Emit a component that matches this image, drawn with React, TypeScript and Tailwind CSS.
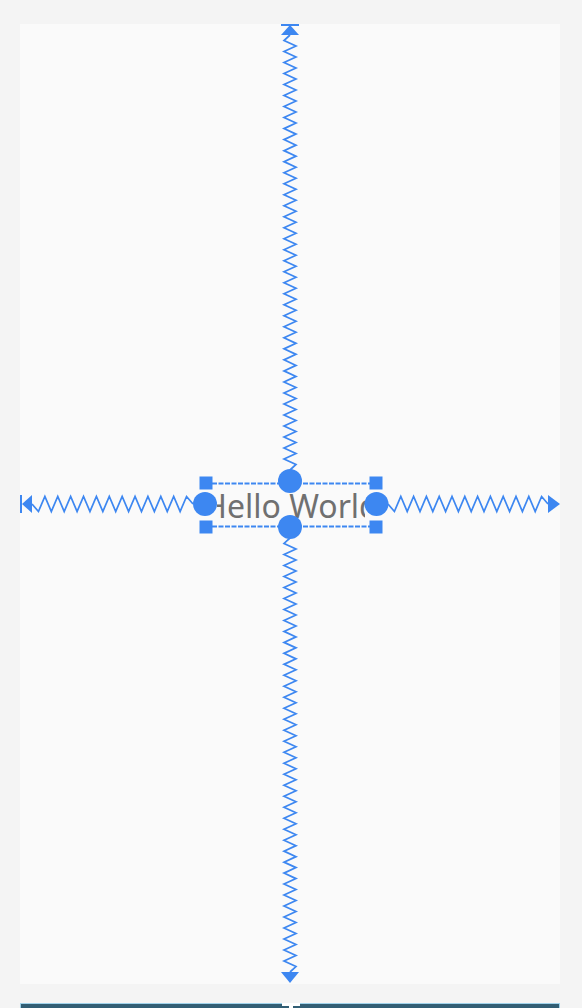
import React from 'react';

const BLUE = '#3d87f1';

// zigzag between two points, teeth perpendicular to the line
function zig(x0: number, y0: number, x1: number, y1: number, period: number, amp: number) {
  const len = Math.hypot(x1 - x0, y1 - y0);
  const ux = (x1 - x0) / len;
  const uy = (y1 - y0) / len;
  const n = Math.max(2, Math.round(len / (period / 2)));
  const step = len / n;
  const pts: string[] = [`${x0},${y0}`];
  for (let i = 1; i < n; i++) {
    const s = i * step;
    const side = i % 2 === 0 ? -amp : amp;
    pts.push(`${x0 + ux * s - uy * side},${y0 + uy * s + ux * side}`);
  }
  pts.push(`${x1},${y1}`);
  return pts.join(' ');
}

function Overlay() {
  const squares = [
    [186, 459],
    [356, 459],
    [186, 503],
    [356, 503],
  ];
  return (
    <svg className="absolute inset-0" width={540} height={960} viewBox="0 0 540 960">
      <g fill="none" stroke={BLUE} strokeWidth={1.7} strokeLinejoin="miter">
        <polyline points={zig(270, 11, 270, 446, 11, 6)} />
        <polyline points={zig(270, 514, 270, 948, 11, 6)} />
        <polyline points={zig(12, 480, 173, 480, 13, 7.5)} />
        <polyline points={zig(368, 480, 528, 480, 13, 7.5)} />
      </g>
      <g stroke={BLUE} strokeWidth={1.8} strokeDasharray="5 1.5">
        <line x1={192} y1={459.5} x2={350} y2={459.5} />
        <line x1={192} y1={502.5} x2={350} y2={502.5} />
      </g>
      <g fill={BLUE}>
        <rect x={261} y={0} width={18} height={2} />
        <polygon points="270,1 261,11 279,11" />
        <polygon points="261,948 279,948 270,959" />
        <rect x={0} y={471} width={2} height={18} />
        <polygon points="2,480 12,471 12,489" />
        <polygon points="528,471 528,489 540,480" />
        {squares.map(([x, y]) => (
          <rect key={`${x}-${y}`} x={x - 6.5} y={y - 6.5} width={13} height={13} />
        ))}
        <circle cx={270} cy={457} r={12} />
        <circle cx={270} cy={503} r={12} />
        <circle cx={185} cy={480} r={12} />
        <circle cx={356.5} cy={480} r={12} />
      </g>
    </svg>
  );
}

export default function App() {
  return (
    <div className="h-[1008px] w-[582px] overflow-hidden bg-[#f4f4f4] pt-[24px] px-[20px] flex flex-col">
      {/* Design canvas */}
      <div className="relative w-[540px] h-[960px] shrink-0 bg-[#fafafa]">
        {/* TextView clipped by its own bounds */}
        <div className="absolute left-[197px] top-[459px] w-[148px] h-[44px] overflow-hidden flex items-center justify-center">
          <span
            className="whitespace-nowrap text-[32px] leading-none text-[#707070] pt-[2px]"
            style={{ fontFamily: '"Noto Sans", sans-serif' }}
          >
            Hello World
          </span>
        </div>
        <Overlay />
      </div>

      {/* Blueprint strip below */}
      <div className="relative mt-[19px] w-[540px] h-[10px] shrink-0 border border-[#9fd2ea] bg-[#325e74]">
        <div className="absolute left-[261px] -top-px w-[18px] h-[3px] bg-white" />
        <div className="absolute left-[268px] top-[2px] w-[4px] h-[3px] bg-white" />
      </div>
    </div>
  );
}
